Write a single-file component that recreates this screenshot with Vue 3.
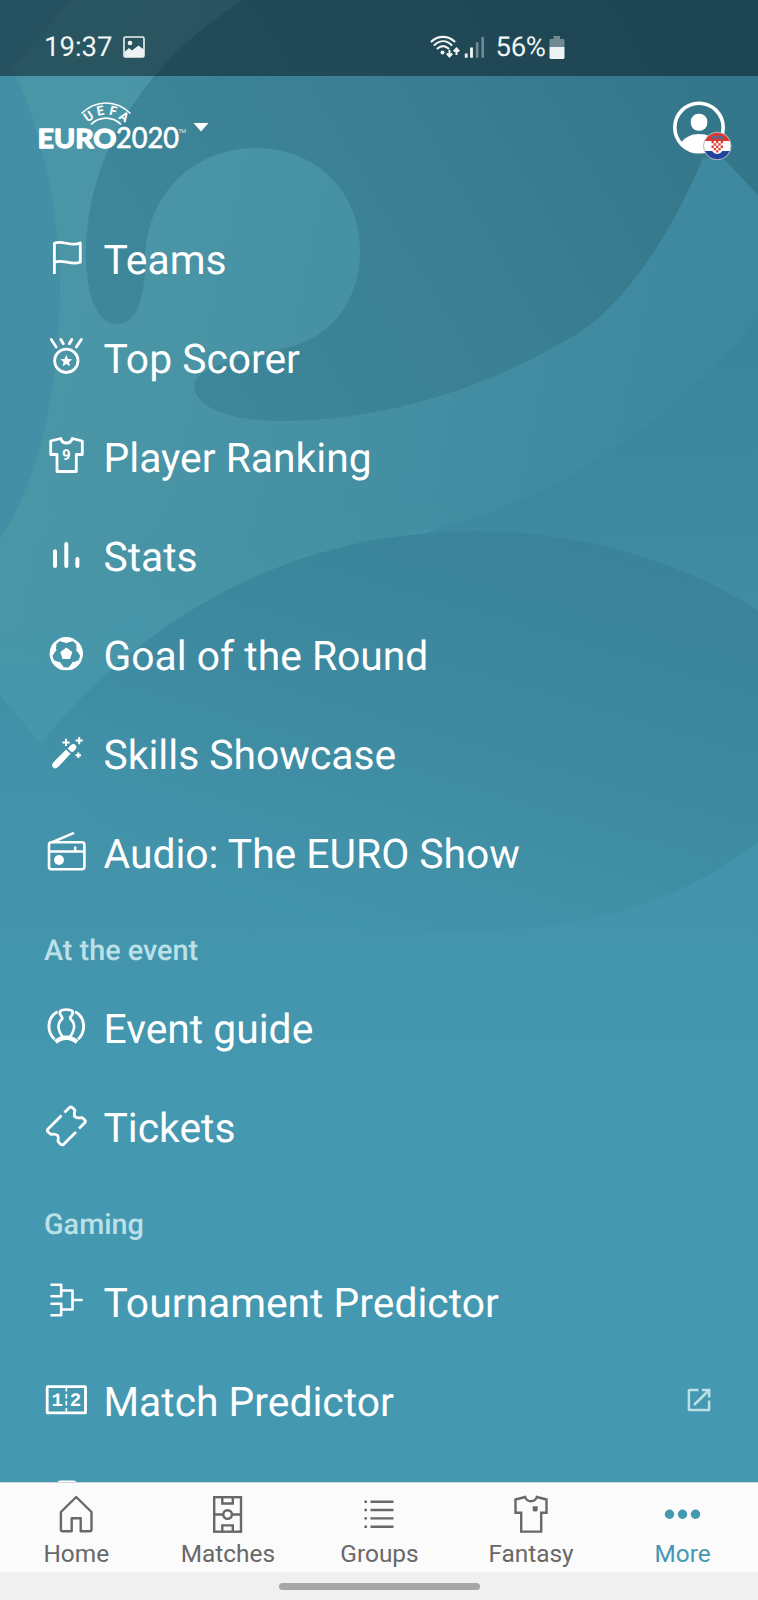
<script setup>
import { ref } from 'vue'

const sections = [
  {
    title: '',
    items: [
      { icon: 'flag', label: 'Teams' },
      { icon: 'medal', label: 'Top Scorer' },
      { icon: 'shirt', label: 'Player Ranking' },
      { icon: 'stats', label: 'Stats' },
      { icon: 'ball', label: 'Goal of the Round' },
      { icon: 'wand', label: 'Skills Showcase' },
      { icon: 'radio', label: 'Audio: The EURO Show' },
    ],
  },
  {
    title: 'At the event',
    items: [
      { icon: 'trophy', label: 'Event guide' },
      { icon: 'ticket', label: 'Tickets' },
    ],
  },
  {
    title: 'Gaming',
    items: [
      { icon: 'bracket', label: 'Tournament Predictor' },
      { icon: 'score', label: 'Match Predictor', external: true },
      { icon: 'card', label: '' },
    ],
  },
]

const tabs = ['Home', 'Matches', 'Groups', 'Fantasy', 'More']
const activeTab = ref('More')
</script>

<template>
  <div class="screen">
    <svg class="backdrop" viewBox="0 0 758 1600" aria-hidden="true">
      <defs>
        <linearGradient id="base" x1="0" y1="0" x2="0" y2="1">
          <stop offset="0" stop-color="#4b96a5" />
          <stop offset="0.25" stop-color="#4793a7" />
          <stop offset="0.6" stop-color="#4498b0" />
          <stop offset="1" stop-color="#4498b1" />
        </linearGradient>
        <linearGradient id="band" gradientUnits="userSpaceOnUse" x1="100" y1="200" x2="720" y2="330">
          <stop offset="0" stop-color="#4b96a6" />
          <stop offset="1" stop-color="#3d889f" />
        </linearGradient>
        <linearGradient id="swirl" gradientUnits="userSpaceOnUse" x1="150" y1="420" x2="720" y2="90">
          <stop offset="0" stop-color="#3e879b" />
          <stop offset="0.5" stop-color="#3b8093" />
          <stop offset="1" stop-color="#347689" />
        </linearGradient>
        <linearGradient id="lower" gradientUnits="userSpaceOnUse" x1="0" y1="320" x2="0" y2="1100">
          <stop offset="0" stop-color="#3a859c" />
          <stop offset="0.3" stop-color="#3e8aa1" />
          <stop offset="0.52" stop-color="#4291a8" />
          <stop offset="1" stop-color="#4498b0" />
        </linearGradient>
        <linearGradient id="oval" gradientUnits="userSpaceOnUse" x1="530" y1="530" x2="410" y2="935">
          <stop offset="0" stop-color="#3a8398" />
          <stop offset="0.45" stop-color="#3d899f" />
          <stop offset="1" stop-color="#4294ab" />
        </linearGradient>
        <linearGradient id="fade" gradientUnits="userSpaceOnUse" x1="0" y1="500" x2="0" y2="760">
          <stop offset="0" stop-color="#4696a9" stop-opacity="0" />
          <stop offset="1" stop-color="#4497ad" />
        </linearGradient>
      </defs>
      <rect width="758" height="1600" fill="url(#base)" />
      <path fill="url(#lower)" d="M758 316C670 425 550 500 435 529L41 743L0 695V1100H758Z" />
      <path fill="url(#band)" d="M0 0H758V316C670 425 550 500 435 529C280 550 130 640 41 743L0 695Z" />
      <path fill="url(#fade)" d="M0 500H480L435 529C280 550 130 640 41 743L0 695Z" />
      <path fill="#438fa5" d="M0 0H72L12 67C40 125 59 205 60 285C60 370 46 468 0 539Z" />
      <path
        fill="url(#swirl)"
        d="M243 0C140 65 84 160 86 262C88 300 98 324 117 324C136 324 145 300 145 262
          C145 195 193 148 256 148C318 148 360 194 360 250C360 300 332 336 290 347
          C240 358 196 366 194 386C196 411 237 421 285 421C385 420 490 388 580 332
          C628 300 672 232 703 158L725 160L758 195V0Z"
      />
      <path fill="url(#oval)" d="M41 743C150 610 300 531 474 531C585 531 690 565 758 611V842C690 895 610 925 500 930C280 945 110 880 41 743Z" />
    </svg>

    <div class="status-bar">
      <span class="status-text">19:37</span>
      <svg class="photo-icon" viewBox="0 0 22 22">
        <rect x="1" y="1" width="20" height="20" rx="1.5" fill="none" stroke="#eef2f3" stroke-width="1.6" />
        <circle cx="7" cy="7" r="2.3" fill="#eef2f3" />
        <path d="M1.5 16L6 12L9 14.500L15.500 9.500L18 11.500L21 13.500V21H1.500Z" fill="#eef2f3" />
      </svg>
      <div class="status-right">
        <svg width="56" height="24" viewBox="0 0 56 24" fill="none">
          <g stroke="#f4f7f7" stroke-width="2.1" stroke-linecap="round">
            <path d="M1.500 6.500C8 .3 18 .3 24.500 6.500" />
            <path d="M4.500 10C10 5 16.500 5 21.500 10" />
            <path d="M7.500 13.500C11 10.500 15 10.500 18.500 13.500" />
          </g>
          <circle cx="12.500" cy="17.500" r="2" fill="#f4f7f7" />
          <path d="M19.500 15V20.500M16.800 18.500L19.500 21.500L22.200 18.500M26.500 20V14.500M23.800 16.500L26.500 13.500L29.200 16.500" stroke="#f4f7f7" stroke-width="2" />
          <path d="M36.200 18.500V22.800M41.500 12.500V22.800" stroke="#f4f7f7" stroke-width="2.8" />
          <path d="M47.200 7.200V22.800M52.700 2V22.800" stroke="#708b92" stroke-width="2.6" />
        </svg>
        <span class="status-text percent">56%</span>
        <svg width="16" height="24" viewBox="0 0 16 24">
          <path d="M4.500 1H11V4H14.500Q15.500 4 15.500 5V12H.5V5Q.5 4 1.500 4H4.500Z" fill="#708b92" />
          <path d="M.5 12H15.500V22.500Q15.500 24 14 24H2Q.5 24 .5 22.500Z" fill="#eef2f3" />
        </svg>
      </div>
    </div>

    <header class="header">
      <button class="logo" aria-label="UEFA EURO 2020">
        <svg width="176" height="64" viewBox="36 98 176 64" fill="none">
          <g stroke="#fff" stroke-width="1.700">
            <path d="M81.500 113.500C96 99.500 116 99.500 130.500 113.500" />
            <path d="M91 124.500C99 116 113 116 121 124.500" />
          </g>
          <g class="uefa" text-anchor="middle">
            <text transform="translate(91 120) rotate(-34)">U</text>
            <text transform="translate(101 115) rotate(-10)">E</text>
            <text transform="translate(112.300 115.200) rotate(13)">F</text>
            <text transform="translate(121.500 120.500) rotate(34)">A</text>
          </g>
          <text class="euro" x="37.500" y="147.500" textLength="79" lengthAdjust="spacingAndGlyphs">EURO</text>
          <text class="year" x="116" y="148" textLength="63" lengthAdjust="spacingAndGlyphs">2020</text>
          <text class="tm" x="178.500" y="132.500" textLength="7.500">TM</text>
          <path d="M193.500 123H208.500L201 131.500Z" fill="#fff" />
        </svg>
      </button>
      <button class="avatar" aria-label="Profile">
        <svg width="60" height="60" viewBox="672 100 60 60">
          <defs>
            <clipPath id="face"><circle cx="699" cy="127.500" r="25" /></clipPath>
            <clipPath id="flagRound"><circle cx="717.300" cy="146" r="13.500" /></clipPath>
          </defs>
          <circle cx="699" cy="127.500" r="24.200" fill="none" stroke="#fff" stroke-width="3.600" />
          <rect x="690.800" y="113.800" width="16.500" height="17" rx="7.800" fill="#fff" />
          <path d="M679 146C684 137 691 134 699 134C707 134 714 137 719 146V156H679Z" fill="#fff" clip-path="url(#face)" />
          <g clip-path="url(#flagRound)">
            <rect x="703" y="132" width="29" height="9" fill="#df352b" />
            <rect x="703" y="141" width="29" height="10" fill="#fff" />
            <rect x="703" y="151" width="29" height="9" fill="#20449b" />
            <path d="M711.500 141H723V149Q722 153.500 717.300 154Q712.500 153.500 711.500 149Z" fill="#fff" />
            <path
              d="M711.500 141h2.300v2.300h-2.300zM716.100 141h2.300v2.300h-2.300zM720.700 141h2.300v2.300h-2.300z
                M713.800 143.300h2.300v2.300h-2.300zM718.400 143.300h2.300v2.300h-2.300zM711.500 145.600h2.300v2.300h-2.300z
                M716.100 145.600h2.300v2.300h-2.300zM720.700 145.600h2.300v2.300h-2.300zM713.800 147.900h2.300v2.300h-2.300z
                M718.400 147.900h2.300v2.300h-2.300zM716.100 150.200h2.300v2.300h-2.300z"
              fill="#e03b35"
            />
            <path d="M712 138.500Q717.300 136 722.800 138.500" fill="none" stroke="#49709c" stroke-width="3.500" stroke-dasharray="2 .5" />
          </g>
          <circle cx="717.300" cy="146" r="13.800" fill="none" stroke="#b8bcc9" stroke-width="1" />
        </svg>
      </button>
    </header>

    <main class="menu">
      <section v-for="section in sections" :key="section.title">
        <h2 v-if="section.title" class="section-title">{{ section.title }}</h2>
        <div v-for="item in section.items" :key="item.icon" class="row">
          <svg class="row-icon" viewBox="0 0 48 48">
            <path v-if="item.icon === 'flag'" d="M12.400 41V10.200C20.700 6.700 29 14.200 38.300 10V29.200C29 32.700 21 25.700 12.700 29.200" />
            <g v-else-if="item.icon === 'medal'">
              <circle cx="24.300" cy="28.800" r="11.700" />
              <path d="M9.300 7.500L14.200 15M18.800 7.500L21.300 11.800M39.300 7.500L34.400 15M29.800 7.500L27.300 11.800" stroke-linecap="round" />
              <path class="solid" d="M24.300 22.800L26 26.900L30.200 27.200L27 30L28 34.200L24.300 31.900L20.600 34.200L21.600 30L18.400 27.200L22.600 26.900Z" />
            </g>
            <g v-else-if="item.icon === 'shirt'">
              <path d="M8.700 10L18.700 7.500Q20 12 24.500 12Q29 12 30.300 7.500L40.300 10V23.500H34.300V40.500H15V23.500H8.700Z" />
              <text class="digit" x="24.200" y="28.500" text-anchor="middle" font-size="15">9</text>
            </g>
            <path v-else-if="item.icon === 'stats'" d="M13 21.200V36M24.300 14V36M35.400 29V36" stroke-width="4" stroke-linecap="round" />
            <g v-else-if="item.icon === 'ball'">
              <circle cx="24.300" cy="24.700" r="15.200" stroke-width="2.700" />
              <path class="solid" d="M24.300 18.500L30.300 22.900L28 30H20.600L18.300 22.900Z" />
              <path
                v-for="turn in 5"
                :key="turn"
                class="solid"
                d="M17.300 9.500Q24.300 7 31.300 9.500L29.300 12.700Q26.300 12.700 24.300 14.300Q22.300 12.700 19.300 12.700Z"
                :transform="`rotate(${turn * 72} 24.300 24.700)`"
              />
            </g>
            <g v-else-if="item.icon === 'wand'">
              <path d="M13.300 37.200L26.300 23.700" stroke-width="6.200" />
              <path d="M13.300 37.200L20 30.200" stroke-width="6.200" stroke-linecap="round" />
              <path class="solid" d="M25.800 20.700Q28.500 15.700 32 15.900Q34.900 17 34.300 20.200Q32.700 23 29.800 24.300Z" />
              <path d="M24 10.800V18M20.400 14.400H27.600M37.200 9V16.200M33.600 12.600H40.800M36.300 24.500V30M33.500 27.300H39" stroke-width="2" />
            </g>
            <g v-else-if="item.icon === 'radio'">
              <rect x="7" y="15.200" width="35.400" height="27" rx="2.500" stroke-width="2.600" />
              <path d="M7 24.500H42.400M33.200 24.500V19.500M9.500 15.500L32 5.800" stroke-width="2.500" />
              <circle class="solid" cx="17" cy="33" r="4.900" />
            </g>
            <g v-else-if="item.icon === 'trophy'">
              <path d="M15.500 9.700C5.500 14.800 4 29 12.500 37.300M33.100 9.700C43.100 14.800 44.600 29 36.100 37.300" stroke-width="2.900" />
              <path
                d="M20.300 15.200Q17.300 12.500 18 9.700Q19 7.700 24.300 7.700Q29.600 7.700 30.600 9.700Q31.300 12.500 28.300 15.200
                  Q28 17.300 30 18.500C34 23 31.500 30 28 35M20.300 15.200Q20.600 17.300 18.600 18.500C14.600 23 17.100 30 20.600 35"
                stroke-width="2.800"
              />
              <path d="M13.500 40Q19 35.500 24.300 35.800Q29.600 35.500 35.100 40" stroke-width="4.500" />
            </g>
            <path
              v-else-if="item.icon === 'ticket'"
              d="M22.500 11.500L27.300 6.700Q28.900 5.200 30.500 6.700L33 9.200Q31.700 12.500 32.500 15.300Q35.500 17.800 40 16.500L42.800 19
                Q44 20.300 42.800 21.700L37 27.500M34 31L21.700 43.200Q20.300 44.700 18.700 43.200L16 40.500Q17 37.200 15.700 34.500
                Q13 32.500 9 33.400L6 31Q4.700 29.600 6 28L19.500 14.500"
            />
            <path
              v-else-if="item.icon === 'bracket'"
              d="M9.500 8.800H19.200V20.300H9.500M9.500 27.700H19.200V39.300H9.500M19.200 14.500H30.500V33.500H19.200M30.500 24H39.600"
              stroke-width="2.600"
              stroke-linecap="round"
            />
            <g v-else-if="item.icon === 'score'">
              <rect x="5.200" y="11.700" width="38.300" height="26.200" rx=".5" />
              <path d="M24.300 12V37" stroke-width="1.700" stroke-dasharray="4.500 2.500" />
              <text class="digit mono" x="15.200" y="30.800" text-anchor="middle" font-size="19">1</text>
              <text class="digit mono" x="33.400" y="30.800" text-anchor="middle" font-size="19">2</text>
            </g>
            <rect v-else x="15" y="8" width="20" height="32" rx="4" />
          </svg>
          <span class="row-label">{{ item.label }}</span>
          <svg v-if="item.external" class="external" viewBox="0 0 24 24">
            <path d="M11.500 2H2.500Q1.900 2 1.900 2.600V21.400Q1.900 22 2.500 22H21.500Q22.100 22 22.100 21.400V12.500M15 2H22.200V9.500M21.700 2.500L7 17" />
          </svg>
        </div>
      </section>
    </main>

    <nav class="tab-bar">
      <button
        v-for="tab in tabs"
        :key="tab"
        class="tab"
        :class="{ active: tab === activeTab }"
        @click="activeTab = tab"
      >
        <svg class="tab-icon" viewBox="0 0 48 48">
          <path v-if="tab === 'Home'" d="M24.200 7L39.500 22V39.500Q39.500 41.300 37.700 41.300H28.700V28.300H19.700V41.300H10.700Q8.900 41.300 8.900 39.500V22Z" stroke-linejoin="round" />
          <g v-else-if="tab === 'Matches'">
            <rect x="11.200" y="7.200" width="26.800" height="34.500" />
            <path d="M19.300 7.200V13.500H29.800V7.200M19.300 41.700V35.400H29.800V41.700M11.200 24.500H20.300M28.900 24.500H38" />
            <circle cx="24.600" cy="24.500" r="4.300" />
          </g>
          <path v-else-if="tab === 'Groups'" d="M9.400 11.700H12M9.400 20H12M9.400 28.400H12M9.400 36.700H12M15.500 11.700H38.500M15.500 20H38.500M15.500 28.400H38.500M15.500 36.700H38.500" />
          <g v-else-if="tab === 'Fantasy'">
            <path d="M8.500 9.500L18.200 7Q19.500 11.200 24 11.200Q28.500 11.200 29.800 7L39.500 9.500V22.800H34.200V41.600H14.200V22.800H8.500Z" />
            <path d="M25.700 16.200H30.700V20Q30.700 21.500 28.200 21.500Q25.700 21.500 25.700 20Z" fill="currentColor" stroke="none" />
          </g>
          <g v-else fill="currentColor" stroke="none">
            <circle cx="11.500" cy="24.300" r="4.700" />
            <circle cx="24.500" cy="24.300" r="4.700" />
            <circle cx="37.500" cy="24.300" r="4.700" />
          </g>
        </svg>
        <span class="tab-label">{{ tab }}</span>
      </button>
    </nav>
    <div class="gesture-bar"><span class="handle"></span></div>
  </div>
</template>

<style>
body {
  margin: 0;
}
</style>

<style scoped>
.screen {
  position: relative;
  width: 758px;
  height: 1600px;
  display: flex;
  flex-direction: column;
  overflow: hidden;
  font-family: Roboto, "Liberation Sans", sans-serif;
  text-rendering: geometricPrecision;
  color: #fff;
  background: #4498b1;
}
.backdrop {
  position: absolute;
  inset: 0;
  z-index: 0;
}
.status-bar,
.header,
.menu,
.tab-bar,
.gesture-bar {
  position: relative;
  z-index: 1;
}
button {
  padding: 0;
  border: 0;
  background: none;
  font: inherit;
  color: inherit;
}

.status-bar {
  display: flex;
  align-items: center;
  box-sizing: border-box;
  height: 76px;
  padding: 18px 0 0 44px;
  background: rgba(8, 20, 28, 0.5);
}
.status-text {
  font-size: 27.5px;
  line-height: 32px;
  color: #f1f5f5;
}
.photo-icon {
  width: 22px;
  height: 22px;
  margin-left: 11px;
}
.status-right {
  display: flex;
  align-items: center;
  margin-left: 285px;
}
.percent {
  margin: 0 3px 0 9px;
  letter-spacing: -0.3px;
}

.header {
  display: flex;
  justify-content: space-between;
  align-items: flex-start;
  box-sizing: border-box;
  height: 135px;
  padding: 22px 26px 0 36px;
}
.header svg {
  display: block;
}
.avatar {
  margin-top: 2px;
}
.uefa {
  font-size: 13px;
  font-weight: 700;
  fill: #fff;
}
.euro {
  font-family: Lato, sans-serif;
  font-size: 26.5px;
  font-weight: 700;
  fill: #fff;
  stroke: #fff;
  stroke-width: 1.3px;
  stroke-linejoin: round;
}
.year {
  font-family: Lato, sans-serif;
  font-size: 28px;
  fill: #fff;
  stroke: #fff;
  stroke-width: 0.6px;
  stroke-linejoin: round;
}
.tm {
  font-size: 5.5px;
  fill: #d5e7eb;
}

.menu {
  flex: 1;
  min-height: 0;
  overflow: hidden;
}
.section-title {
  box-sizing: border-box;
  height: 76px;
  margin: 0;
  padding: 19px 0 0 44px;
  font-size: 28.8px;
  font-weight: 500;
  line-height: 56px;
  color: #bbe0e8;
}
.row {
  display: flex;
  align-items: flex-start;
  height: 99px;
  padding: 0 47px 0 42px;
}
.row-icon {
  flex: none;
  width: 48px;
  height: 48px;
  margin: 22px 13.5px 0 0;
  fill: none;
  stroke: #fff;
  stroke-width: 2.8;
  stroke-linejoin: round;
}
.solid {
  fill: #fff;
  stroke: none;
}
.digit {
  fill: #fff;
  stroke: none;
  font-weight: 700;
}
.mono {
  font-family: "Liberation Mono", monospace;
}
.row-label {
  flex: 1;
  font-size: 40.8px;
  line-height: 99px;
  white-space: nowrap;
}
.external {
  width: 24px;
  height: 24px;
  margin-top: 35px;
  fill: none;
  stroke: #bbe0e8;
  stroke-width: 2.5;
}

.tab-bar {
  display: flex;
  box-sizing: border-box;
  height: 90px;
  border-top: 1.5px solid #d2d8da;
  background: #fbfbfb;
}
.tab {
  flex: 1;
  display: flex;
  flex-direction: column;
  align-items: center;
  padding-top: 7px;
  color: #686868;
}
.tab.active {
  color: #4498b1;
}
.tab-icon {
  width: 48px;
  height: 48px;
  fill: none;
  stroke: currentColor;
  stroke-width: 2.4;
}
.tab-label {
  margin: 2px 0 0 1px;
  font-size: 24.4px;
  line-height: 28px;
}
.gesture-bar {
  height: 28px;
  display: flex;
  justify-content: center;
  align-items: center;
  background: #f0f0f0;
}
.handle {
  width: 201px;
  height: 7px;
  border-radius: 4px;
  background: #a6a6a6;
}
</style>
